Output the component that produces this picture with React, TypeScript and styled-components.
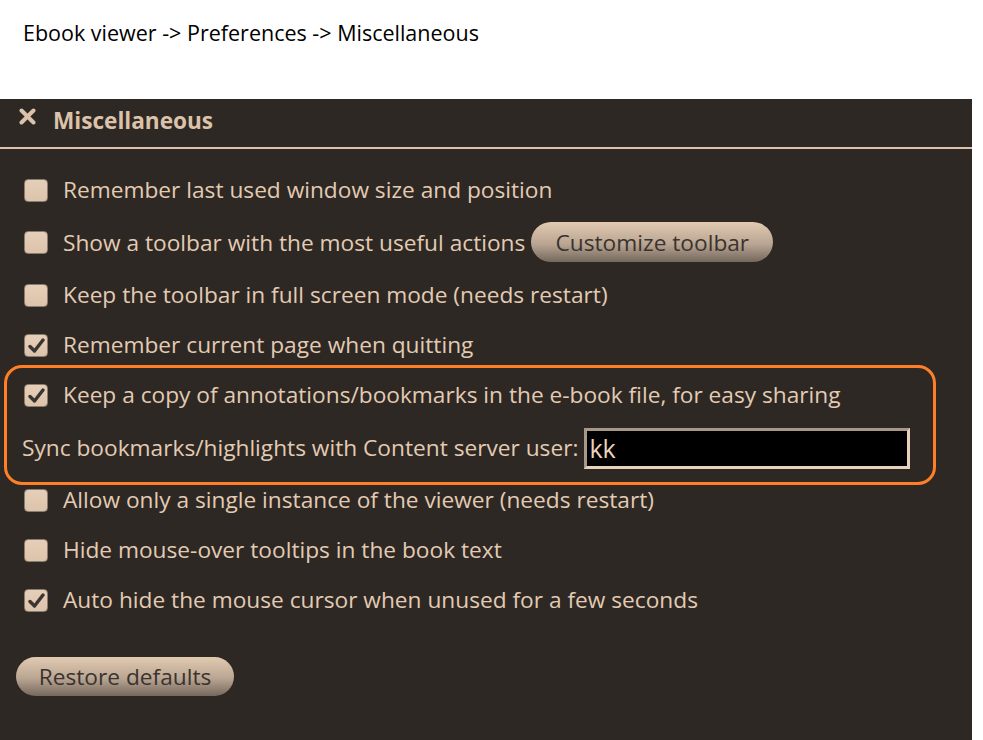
import React from "react";
import styled, { createGlobalStyle } from "styled-components";

const Global = createGlobalStyle`
  html, body { margin: 0; padding: 0; background: #ffffff; }
  body { font-family: "Open Sans", "Noto Sans", sans-serif; }
`;

const Page = styled.div`
  width: 983px;
  height: 740px;
  overflow: hidden;
  background: #ffffff;
`;

const Caption = styled.div`
  height: 99px;
  box-sizing: border-box;
  padding: 19px 0 0 23px;
  font-size: 21.5px;
  line-height: 28px;
  color: #000000;
`;

const Panel = styled.section`
  width: 972px;
  height: 641px;
  background: #2d2824;
  color: #e3cbb3;
`;

const Header = styled.header`
  height: 50px;
  box-sizing: border-box;
  display: flex;
  align-items: center;
  gap: 17px;
  padding: 0 0 5px 19px;
  border-bottom: 2px solid #dcc2aa;
  font-size: 22.6px;
  font-weight: 700;
  color: #dcc2aa;
`;

const IconSlot = styled.span`
  display: flex;
  margin-top: -9px;
`;

const Body = styled.div`
  display: flex;
  flex-direction: column;
  gap: 20px;
  padding: 26px 0 0 24px;
`;

const Row = styled.label`
  display: flex;
  align-items: center;
  gap: 15px;
  min-height: 30px;
  font-size: 22.7px;
  line-height: 30px;
`;

const Box = styled.span<{ $checked?: boolean }>`
  width: 24px;
  height: 23px;
  flex: none;
  box-sizing: border-box;
  border: 1px solid #8c7c70;
  border-radius: 4px;
  background: linear-gradient(#e6cfb8, #dcc3ab);
  display: flex;
  align-items: center;
  justify-content: center;
`;

const PillButton = styled.button<{ $width: number }>`
  width: ${(p) => p.$width}px;
  height: 40px;
  border: none;
  border-radius: 20px;
  background: linear-gradient(#e2cab2 0%, #b9a592 55%, #75685e 100%);
  color: #3a332e;
  font-family: inherit;
  font-size: 22.7px;
  padding: 0;
  flex: none;
`;

const InlineButton = styled(PillButton)`
  margin: -3px 0 -2px -9px;
`;

const RestoreButton = styled(PillButton)`
  height: 39px;
  margin: 22px 0 0 -8px;
`;

const Group = styled.div`
  position: relative;
  display: flex;
  flex-direction: column;
  gap: 21px;
  &::after {
    content: "";
    position: absolute;
    left: -20px;
    right: 36px;
    top: -15px;
    bottom: -20px;
    border: 3.5px solid #ff7f27;
    border-radius: 18px;
    pointer-events: none;
  }
`;

const SyncRow = styled.div`
  display: flex;
  align-items: center;
  gap: 6px;
  margin-left: -2px;
  font-size: 22.7px;
  line-height: 30px;
`;

const TextInput = styled.div`
  width: 326px;
  height: 41px;
  margin: -3px 0 -4px;
  box-sizing: border-box;
  background: #000000;
  border-style: solid;
  border-width: 3px;
  border-color: #a89888 #e9d2bc #e9d2bc #a89888;
  color: #ecd4be;
  font-size: 25px;
  line-height: 34px;
  padding-left: 2px;
`;

const Check = () => (
  <svg width="17" height="15" viewBox="0 0 17 15">
    <path d="M2 8.5 L6.5 13 L15 2" fill="none" stroke="#3b3531" strokeWidth="3.4" strokeLinecap="round" strokeLinejoin="round" />
  </svg>
);

const CloseIcon = () => (
  <svg width="17" height="17" viewBox="0 0 17 17">
    <path d="M2.5 2.5 L14.5 14.5 M14.5 2.5 L2.5 14.5" stroke="#dcc2aa" strokeWidth="4" strokeLinecap="round" />
  </svg>
);

const Option = ({ checked, children }: { checked?: boolean; children: React.ReactNode }) => (
  <Row>
    <Box $checked={checked}>{checked && <Check />}</Box>
    {children}
  </Row>
);

export default function App() {
  return (
    <Page>
      <Global />
      <Caption>Ebook viewer -&gt; Preferences -&gt; Miscellaneous</Caption>
      <Panel>
        <Header>
          <IconSlot>
            <CloseIcon />
          </IconSlot>
          <span>Miscellaneous</span>
        </Header>
        <Body>
          <Option>Remember last used window size and position</Option>
          <Option>
            <span>Show a toolbar with the most useful actions</span>
            <InlineButton $width={242}>Customize toolbar</InlineButton>
          </Option>
          <Option>Keep the toolbar in full screen mode (needs restart)</Option>
          <Option checked>Remember current page when quitting</Option>
          <Group>
            <Option checked>Keep a copy of annotations/bookmarks in the e-book file, for easy sharing</Option>
            <SyncRow>
              <span>Sync bookmarks/highlights with Content server user:</span>
              <TextInput>kk</TextInput>
            </SyncRow>
          </Group>
          <Option>Allow only a single instance of the viewer (needs restart)</Option>
          <Option>Hide mouse-over tooltips in the book text</Option>
          <Option checked>Auto hide the mouse cursor when unused for a few seconds</Option>
          <div>
            <RestoreButton $width={218}>Restore defaults</RestoreButton>
          </div>
        </Body>
      </Panel>
    </Page>
  );
}
